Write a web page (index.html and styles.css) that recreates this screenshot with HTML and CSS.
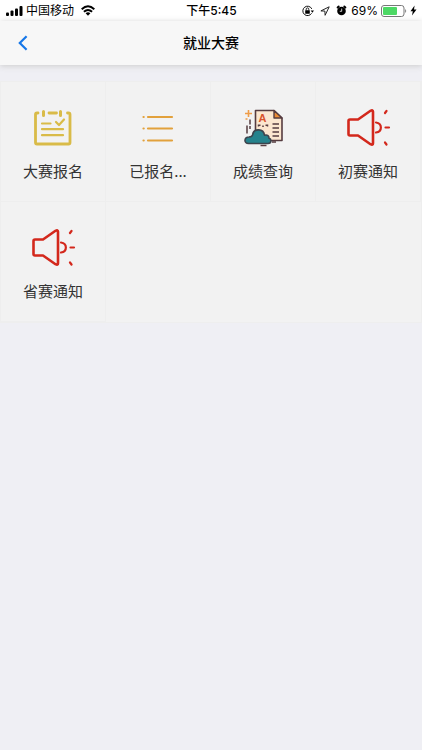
FILE: index.html
```html
<!DOCTYPE html>
<html lang="zh-CN">
<head>
<meta charset="utf-8">
<meta name="viewport" content="width=device-width, initial-scale=1">
<title>就业大赛</title>
<link rel="stylesheet" href="styles.css">
</head>
<body>
<svg class="defs" aria-hidden="true">
  <symbol id="horn" viewBox="0 0 48 48">
    <g fill="none" stroke="#d3281c" stroke-linecap="round" stroke-linejoin="round">
      <path stroke-width="2.6" d="M6 16.500h8l12.500-8.700q2.500-1.300 2.500 1v31.400q0 2.300-2.500 1L14 32.500H6q-1.500 0-1.500-1.500V18q0-1.500 1.500-1.500z"/>
      <path stroke-width="2.200" d="M32 19.500c6.500.8 6.500 9.200 0 10M41.500 24.500H45M41 10l1.500-2M41 39.500l1.500 2"/>
    </g>
  </symbol>
</svg>
<div class="status">
  <div class="status-side">
    <svg width="17" height="10" viewBox="0 0 17 10"><rect y="6.500" width="3" height="3.500" rx="1"/><rect x="4.500" y="4.500" width="3" height="5.500" rx="1"/><rect x="9" y="2.500" width="3" height="7.500" rx="1"/><rect x="13.500" width="3" height="10" rx="1"/></svg>
    <span class="carrier">中国移动</span>
    <svg class="wifi" width="14" height="11" viewBox="0 0 14 11"><path d="M7 10.800 4.600 8.200q2.400-2 4.800 0z"/><path fill="none" stroke="#000" stroke-width="1.900" d="M.7 4.300q6.300-6 12.600 0M2.900 6.800q4.100-3.700 8.200 0"/></svg>
  </div>
  <div class="time">下午5:45</div>
  <div class="status-side status-right">
    <svg width="12" height="12" viewBox="0 0 12 12"><path fill="none" stroke="#111" d="M9.600 8.300a4.700 4.700 0 1 1 .2-4.400"/><path d="M8.700 5.500h3.300l-1.600 2.300z"/><rect x="3.200" y="5.200" width="4.600" height="3.500" rx=".4"/><path fill="none" stroke="#111" stroke-width=".9" d="M4.200 5.500V4.200a1.300 1.300 0 0 1 2.600 0v1.300"/></svg>
    <svg width="10" height="10" viewBox="0 0 10 10"><path fill="none" stroke="#222" stroke-linejoin="round" d="M9.200.8.900 4.900l4 .2.200 4.200z"/></svg>
    <svg width="11" height="11" viewBox="0 0 11 11"><circle cx="5.500" cy="6" r="4.300"/><path stroke="#000" stroke-width="1.900" stroke-linecap="round" d="M1.600 2.500 2.700 1.500M9.400 2.500 8.300 1.500"/><path fill="none" stroke="#fff" stroke-width=".8" d="M5.700 3.600v2.700H3.800"/></svg>
    <span class="percent">69%</span>
    <svg width="26" height="12" viewBox="0 0 26 12"><rect x=".5" y=".5" width="22.500" height="11" rx="2.500" fill="#fff" stroke="#777"/><rect x="2" y="2" width="14" height="8" rx="1" fill="#4cd864"/><path fill="#777" d="M24.200 4q2 2 0 4z"/></svg>
    <svg class="bolt" width="7" height="11" viewBox="0 0 7 11"><path d="M4.600.5.500 6.200h2.300L2 10.500l4.500-5.900H4z"/></svg>
  </div>
</div>
<header class="nav">
  <button class="back" type="button" aria-label="返回"><svg width="10" height="16" viewBox="0 0 10 16"><path fill="none" stroke="#1677e8" stroke-width="2.200" d="M8.600 1.300 1.800 8l6.800 6.700"/></svg></button>
  <h1 class="title">就业大赛</h1>
</header>
<main class="grid">
  <a class="cell" href="#">
    <svg class="icon" viewBox="0 0 48 48"><g fill="none" stroke="#d9bb48" stroke-linecap="round" stroke-linejoin="round"><path stroke-width="2.800" d="M9 10H8q-1.500 0-1.500 1.500v28Q6.500 41 8 41h31.500q1.500 0 1.500-1.500v-28q0-1.500-1.500-1.500h-1M20 10h7.500"/><path stroke-width="3" d="M14.500 8.500v4M31.500 8.500v4"/><path stroke-width="2.200" d="M13 20.500h8.500M13 26.200h21M13 32.200h21M27 19l3 3 5-5.500"/></g></svg>
    <span class="label">大赛报名</span>
  </a>
  <a class="cell" href="#">
    <svg class="icon" viewBox="0 0 48 48"><path fill="none" stroke="#e2a13c" stroke-width="2.200" stroke-linecap="round" d="M14 14h24M14 25.500h24M14 37.500h24M9.500 14h.2M9.500 25.500h.2M9.500 37.500h.2"/></svg>
    <span class="label">已报名...</span>
  </a>
  <a class="cell" href="#">
    <svg class="icon" viewBox="-1 0 48 48">
      <path fill="#fbe6cf" stroke="#563c40" stroke-width="1.600" stroke-linejoin="round" d="M15.500 7.500H34l8 7.500v22.500H15.500z"/>
      <path fill="#e98a35" stroke="#563c40" stroke-width="1.400" stroke-linejoin="round" d="M34 7.500V15h8z"/>
      <text class="grade" x="22.500" y="18.500">A</text>
      <path fill="none" stroke="#563c40" stroke-width="1.500" d="M18.500 23.500v-1.300h2M22.200 23.200h1.600M25.500 22.200h2v1.300M32.500 21H39M32.500 25H39M32.500 29H39M32.500 33H39M10 16.500v5M10 23v3M7 22.500v8M20.500 42.500h6M32 39h4"/>
      <path fill="none" stroke="#ef9c48" stroke-width="1.600" d="M8.500 7v7M5 10.500h7M5.500 16h2"/>
      <path fill="#25838d" stroke="#3d454e" stroke-width="1.600" stroke-linejoin="round" d="M8.500 40.500c-5 0-4.500-6.500.5-6.500 2-.2 3.300-.7 3.600-2.200 1.100-6.800 11-6.500 11.900.4 3.200-.8 4.600.9 4.500 3 2.500.5 2.900 5.300-1 5.300z"/>
    </svg>
    <span class="label">成绩查询</span>
  </a>
  <a class="cell" href="#">
    <svg class="icon"><use href="#horn"/></svg>
    <span class="label">初赛通知</span>
  </a>
  <a class="cell" href="#">
    <svg class="icon"><use href="#horn"/></svg>
    <span class="label">省赛通知</span>
  </a>
</main>
</body>
</html>
```
FILE: styles.css
```css
* {
  box-sizing: border-box;
}

body {
  margin: 0;
  min-height: 100vh;
  background: #efeff4;
  color: #000;
  font-family: Inter, "Noto Sans CJK SC", sans-serif;
}

svg {
  display: block;
  flex: none;
}

.defs {
  position: absolute;
  width: 0;
  height: 0;
}

.status {
  display: grid;
  grid-template-columns: 1fr auto 1fr;
  align-items: center;
  height: 21px;
  padding: 0 5px 0 6px;
  background: #fff;
  font-size: 12px;
  line-height: 20px;
}

.status-side {
  display: flex;
  align-items: center;
  gap: 3px;
}

.wifi {
  margin-left: 4px;
}

.time {
  font-weight: 500;
}

.status-right {
  justify-content: flex-end;
}

.status-right svg + svg {
  margin-left: 3px;
}

.status-right .bolt.bolt {
  margin-left: 0;
}

.percent {
  margin-left: 1px;
}

.nav {
  display: grid;
  grid-template-columns: 46px 1fr 46px;
  align-items: center;
  height: 44px;
  background: #f7f7f7;
  box-shadow: 0 1px 6px #ccc;
}

.back {
  display: grid;
  place-items: center;
  height: 44px;
  padding: 0;
  border: 0;
  background: none;
}

.title {
  margin: 0;
  font-size: 14px;
  font-weight: 500;
  line-height: 44px;
  text-align: center;
}

.grid {
  display: grid;
  grid-template-columns: repeat(4, 1fr);
  margin-top: 16px;
  background: #f2f2f2;
  border: 1px solid #eee;
}

.cell {
  display: flex;
  flex-direction: column;
  align-items: center;
  gap: 10px;
  padding: 21px 0 20px;
  border-right: 1px solid #eee;
  border-bottom: 1px solid #eee;
  color: #333;
  text-decoration: none;
}

.icon {
  width: 48px;
  height: 48px;
}

.grade {
  fill: #d9532c;
  font: 700 11px "Liberation Sans", sans-serif;
  text-anchor: middle;
}

.label {
  font-family: "Noto Sans CJK SC", sans-serif;
  font-size: 15px;
  line-height: 20px;
}
```
